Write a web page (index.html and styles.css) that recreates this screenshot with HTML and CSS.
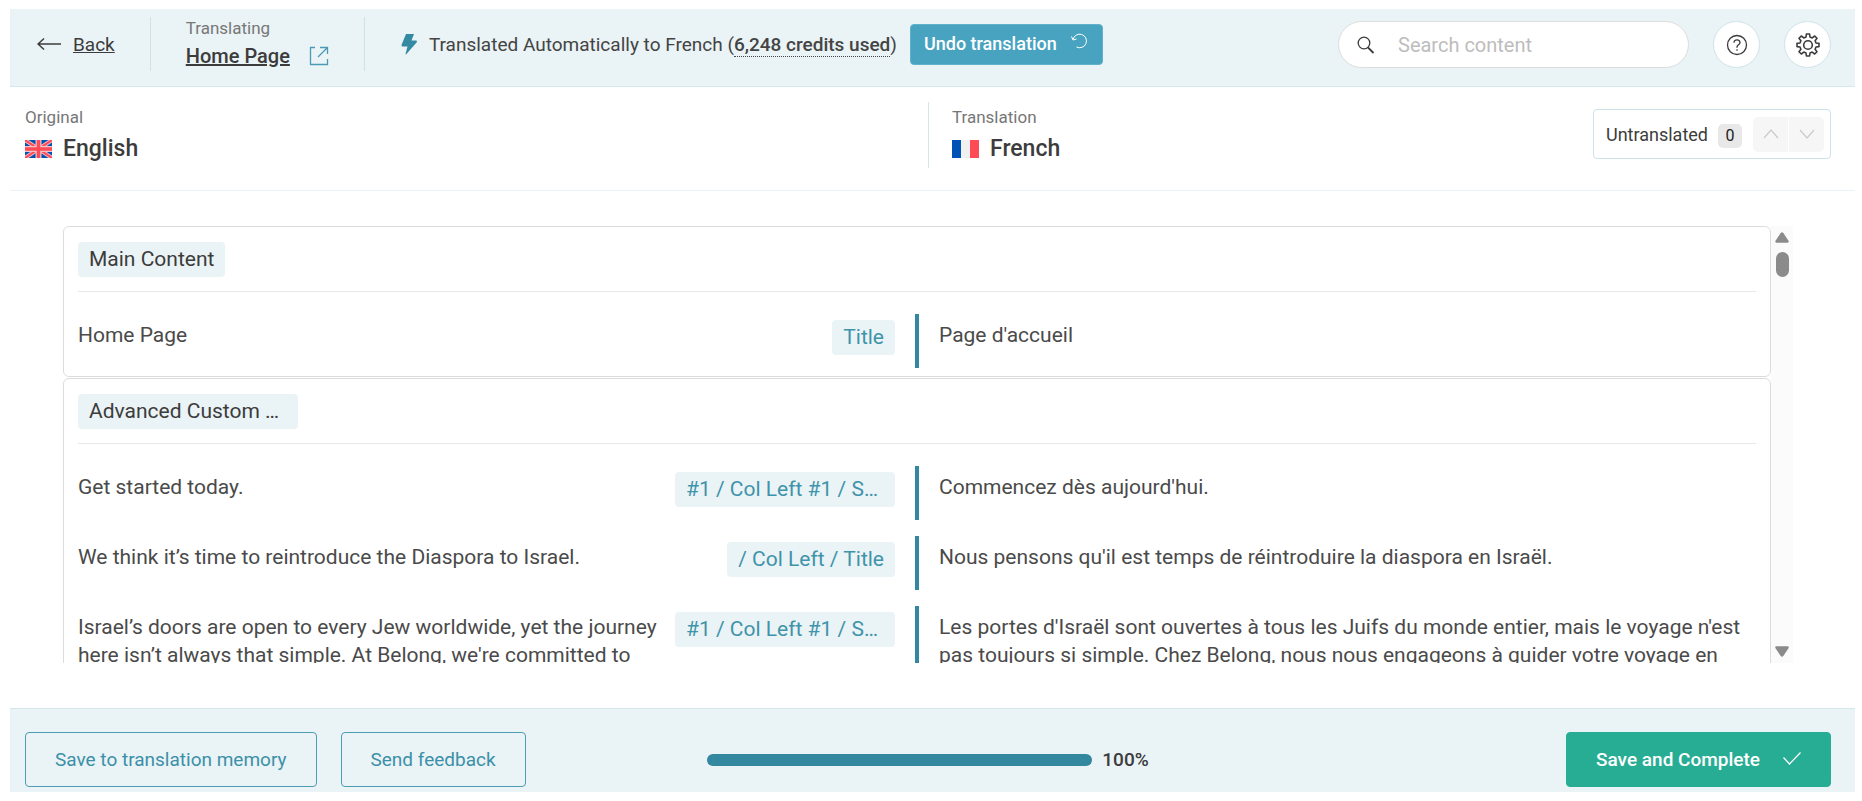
FILE: index.html
```html
<!DOCTYPE html>
<html lang="en">
<head>
    <meta charset="UTF-8">
    <meta name="viewport" content="width=device-width, initial-scale=1.0">
    <title>Translation Editor</title>
    <link rel="stylesheet" href="styles.css">
</head>
<body>
    <header class="topbar">
        <a class="back" href="#">
            <svg width="24" height="14" viewBox="0 0 24 14" fill="none" stroke="currentColor" stroke-width="1.5"><path d="M24 7H1M7 1.5L1 7l6 5.500"/></svg>
            <span class="back-text">Back</span>
        </a>
        <div class="job">
            <div>
                <div class="small">Translating</div>
                <a class="job-title" href="#">Home Page</a>
            </div>
            <a class="external" href="#" aria-label="Open page">
                <svg width="20" height="20" viewBox="0 0 20 20" fill="none" stroke="currentColor" stroke-width="1.300"><path d="M6 1.500H1.500v17h17V13M11 1.500h7.500V8M18 2l-9 9"/></svg>
            </a>
        </div>
        <div class="auto">
            <svg width="16" height="22" viewBox="0 0 16 22" fill="currentColor"><path d="M5 1h8l-2.500 6.500H15.500L16 9 5 21.500 4.500 21 6.500 13.500H1L.5 12z"/></svg>
            <span class="auto-text">Translated Automatically to French (<b class="credits">6,248 credits used</b>)</span>
            <button class="undo" type="button">Undo translation
                <svg width="17" height="16" viewBox="0 0 17 16" fill="none" stroke="currentColor" stroke-width="1"><path d="M2 6.500A6.800 6.800 0 1 1 5.500 14M.5 3.500l1.500 3.500 3.500-1"/></svg>
            </button>
        </div>
        <div class="tools">
            <label class="search">
                <svg width="18" height="18" viewBox="0 0 18 18" fill="none" stroke="currentColor" stroke-width="1.300"><circle cx="7" cy="7" r="5.800"/><path d="M11 11.500l5.500 5.500" stroke-width="1.800"/></svg>
                <input class="search-input" type="text" placeholder="Search content" aria-label="Search content">
            </label>
            <button class="round" type="button" aria-label="Help">
                <svg width="22" height="22" viewBox="0 0 22 22" fill="none" stroke="currentColor" stroke-width="1.300"><circle cx="11" cy="11" r="9.500"/><path d="M8 8.800C8 7 9.300 5.800 11 5.800s3 1.200 3 2.900c0 2-3 2.300-3 4.300v.8M11 15.300v1.500"/></svg>
            </button>
            <button class="round" type="button" aria-label="Settings">
                <svg width="24" height="24" viewBox="0 0 24 24" fill="none" stroke="currentColor" stroke-width="1.600" stroke-linejoin="round"><circle cx="12" cy="12" r="4.300"/><path d="M10.400 1h3.200l.4 3 2.200.9 2.500-1.900 2.300 2.300-1.900 2.500.9 2.200 3 .4v3.200l-3 .4-.9 2.200 1.900 2.500-2.300 2.300-2.500-1.900-2.200.9-.4 3h-3.200l-.4-3-2.200-.9L5.300 21 3 18.700l1.900-2.500L4 14l-3-.4v-3.200l3-.4.9-2.200L3 5.300 5.300 3l2.500 1.900L10 4z"/></svg>
            </button>
        </div>
    </header>

    <section class="languages">
        <div class="lang">
            <div class="small">Original</div>
            <div class="lang-name">
                <svg width="27" height="18" viewBox="0 0 27 18"><path fill="#0052b4" d="M0 0h27v18H0z"/><path stroke="#f0b8c0" stroke-width="4" d="M0 0l27 18M27 0L0 18"/><path stroke="#ff4b55" stroke-width="2" d="M0 0l27 18M27 0L0 18"/><path stroke="#f0c4ca" stroke-width="6" d="M13.500 0v18M0 9h27"/><path stroke="#ff4b55" stroke-width="3.500" d="M13.500 0v18M0 9h27"/></svg>
                English
            </div>
        </div>
        <div class="lang lang-target">
            <div class="small">Translation</div>
            <div class="lang-name">
                <svg width="27" height="18" viewBox="0 0 27 18"><path fill="#0052b4" d="M0 0h9v18H0z"/><path fill="#f0f0f0" d="M9 0h9v18H9z"/><path fill="#ff4b55" d="M18 0h9v18h-9z"/></svg>
                French
            </div>
        </div>
        <div class="untranslated">
            <span>Untranslated</span>
            <span class="count">0</span>
            <div class="nav">
                <button class="nav-btn" type="button" aria-label="Previous" disabled><svg width="16" height="10" viewBox="0 0 16 10" fill="none" stroke="currentColor" stroke-width="1.300"><path d="M1 9l7-8 7 8"/></svg></button>
                <button class="nav-btn" type="button" aria-label="Next" disabled><svg width="16" height="10" viewBox="0 0 16 10" fill="none" stroke="currentColor" stroke-width="1.300"><path d="M1 1l7 8 7-8"/></svg></button>
            </div>
        </div>
    </section>

    <main class="editor">
        <div class="groups">
            <section class="group">
                <div class="group-head"><span class="tag">Main Content</span></div>
                <div class="row">
                    <div class="source">
                        <p class="text">Home Page</p>
                        <span class="tag tag-field">Title</span>
                    </div>
                    <p class="target text">Page d'accueil</p>
                </div>
            </section>
            <section class="group">
                <div class="group-head"><span class="tag tag-long">Advanced Custom …</span></div>
                <div class="row">
                    <div class="source">
                        <p class="text">Get started today.</p>
                        <span class="tag tag-field tag-long">#1 / Col Left #1 / S…</span>
                    </div>
                    <p class="target text">Commencez dès aujourd'hui.</p>
                </div>
                <div class="row">
                    <div class="source">
                        <p class="text">We think it’s time to reintroduce the Diaspora to Israel.</p>
                        <span class="tag tag-field">/ Col Left / Title</span>
                    </div>
                    <p class="target text">Nous pensons qu'il est temps de réintroduire la diaspora en Israël.</p>
                </div>
                <div class="row">
                    <div class="source">
                        <p class="text">Israel’s doors are open to every Jew worldwide, yet the journey here isn’t always that simple. At Belong, we're committed to</p>
                        <span class="tag tag-field tag-long">#1 / Col Left #1 / S…</span>
                    </div>
                    <p class="target text">Les portes d'Israël sont ouvertes à tous les Juifs du monde entier, mais le voyage n'est pas toujours si simple. Chez Belong, nous nous engageons à guider votre voyage en</p>
                </div>
            </section>
        </div>
        <div class="scrollbar">
            <svg width="14" height="11" viewBox="0 0 14 11" fill="currentColor"><path d="M5.500 1.200a2 2 0 0 1 3 0l5 7.500c.5 1 .2 2-1 2h-11c-1.200 0-1.500-1-1-2z"/></svg>
            <div class="thumb"></div>
            <svg class="down" width="14" height="11" viewBox="0 0 14 11" fill="currentColor"><path d="M5.500 9.800a2 2 0 0 0 3 0l5-7.500c.5-1 .2-2-1-2h-11c-1.200 0-1.500 1-1 2z"/></svg>
        </div>
    </main>

    <footer class="bottombar">
        <div class="actions">
            <button class="btn" type="button">Save to translation memory</button>
            <button class="btn" type="button">Send feedback</button>
        </div>
        <div class="progress">
            <div class="track"><div class="fill" style="width: 100%"></div></div>
            <span class="percent">100%</span>
        </div>
        <button class="btn btn-done" type="button">Save and Complete
            <svg width="18" height="18" viewBox="0 0 18 18" fill="none" stroke="currentColor" stroke-width="1.200"><path d="M.5 6.500L6.500 13 17.500 1.500"/></svg>
        </button>
    </footer>
</body>
</html>
```
FILE: styles.css
```css
* {
    box-sizing: border-box;
}
body {
    display: flex;
    flex-direction: column;
    height: 100vh;
    margin: 0;
    padding: 9px 7px 9px 10px;
    background-color: #fff;
    color: #3c3c3c;
    font-family: Roboto, Arial, sans-serif;
    font-size: 19px;
}
button, input {
    font: inherit;
    color: inherit;
}
button {
    cursor: pointer;
}
svg {
    display: block;
    flex: none;
}
a {
    color: inherit;
}

/* top bar */
.topbar {
    display: flex;
    align-items: flex-start;
    flex: none;
    height: 78px;
    padding: 8px 24px 0 27px;
    background-color: #eaf3f6;
    border-bottom: 1px solid #d5e8ee;
}
.back {
    display: flex;
    align-items: center;
    gap: 12px;
    height: 54px;
    padding-right: 35px;
    border-right: 1px solid #cfe2e8;
    text-decoration: none;
}
.back-text {
    text-decoration: underline;
}
.job {
    display: flex;
    gap: 19px;
    height: 54px;
    padding: 0 35px;
    border-right: 1px solid #cfe2e8;
}
.small {
    color: #777;
    font-size: 17px;
    line-height: 22px;
}
.job-title {
    font-size: 20px;
    font-weight: 500;
    line-height: 34px;
}
.external {
    padding-top: 29px;
    color: #4a9ab3;
}
.auto {
    display: flex;
    align-items: center;
    gap: 12px;
    height: 54px;
    padding-left: 36px;
    color: #338aa2;
}
.auto-text {
    color: #444;
}
.credits {
    border-bottom: 1px dotted #444;
    font-weight: 500;
}
.undo {
    display: flex;
    gap: 14px;
    height: 41px;
    margin-left: 1px;
    padding: 8px 14px 8px 13px;
    border: 1px solid #60b1ca;
    border-radius: 4px;
    background-color: #48a3c0;
    color: #fff;
    font-size: 18px;
    font-weight: 500;
    line-height: 22px;
}
.tools {
    display: flex;
    gap: 24px;
    margin: 4px 0 0 auto;
}
.search {
    display: flex;
    align-items: center;
    gap: 23px;
    width: 351px;
    height: 47px;
    padding: 0 18px;
    border: 1px solid #ddd;
    border-radius: 24px;
    background-color: #fff;
}
.search-input {
    width: 100%;
    padding: 0;
    border: 0;
    outline: 0;
    background: none;
    font-size: 20px;
}
.search-input::placeholder {
    color: #bdbdbd;
}
.round {
    display: flex;
    align-items: center;
    justify-content: center;
    width: 47px;
    height: 47px;
    padding: 0;
    border: 1px solid #cfe4ea;
    border-radius: 50%;
    background-color: #fff;
}

/* language bar */
.languages {
    display: flex;
    align-items: flex-start;
    flex: none;
    height: 104px;
    padding: 15px 24px 0 15px;
    border-bottom: 1px solid #e9f2f5;
}
.lang {
    width: 50%;
    height: 66px;
    padding-top: 4px;
}
.lang-target {
    flex: 1;
    width: auto;
    padding-left: 23px;
    border-left: 1px solid #d5e5ea;
}
.lang-name {
    display: flex;
    align-items: center;
    gap: 11px;
    font-size: 23px;
    font-weight: 500;
    line-height: 42px;
}
.untranslated {
    display: flex;
    align-items: center;
    height: 50px;
    margin-top: 7px;
    padding: 0 6px 0 12px;
    border: 1px solid #cde3ea;
    border-radius: 4px;
    font-size: 18px;
}
.count {
    width: 24px;
    margin: 3px 11px 0 10px;
    border-radius: 5px;
    background-color: #e8e8e8;
    color: #222;
    font-size: 16px;
    line-height: 24px;
    text-align: center;
}
.nav {
    display: flex;
    gap: 1px;
    overflow: hidden;
    border-radius: 5px;
}
.nav-btn {
    display: flex;
    align-items: center;
    justify-content: center;
    width: 35px;
    height: 35px;
    padding: 0;
    border: 0;
    background-color: #f6f6f6;
    color: #ccc;
}

/* translation editor */
.editor {
    display: flex;
    flex: 1;
    min-height: 0;
    margin: 35px 62px 45px 53px;
}
.groups {
    flex: 1;
    overflow: hidden;
}
.group {
    padding: 15px 14px 8px;
    border: 1px solid #dcdcdc;
    border-radius: 6px;
    margin-bottom: 1px;
}
.group-head {
    display: flex;
    padding-bottom: 14px;
    margin-bottom: 22px;
    border-bottom: 1px solid #e8e8e8;
}
.tag {
    flex: none;
    padding: 0 11px;
    border-radius: 4px;
    background-color: #eaf3f5;
    font-size: 21px;
    line-height: 35px;
    white-space: nowrap;
}
.tag-field {
    color: #3f93ab;
}
.tag-long {
    width: 220px;
}
.row {
    display: grid;
    grid-template-columns: 1fr 1fr;
    min-height: 54px;
    margin-bottom: 16px;
}
.row:last-child {
    margin-bottom: 0;
}
.source {
    display: flex;
    align-items: flex-start;
    justify-content: space-between;
    gap: 16px;
    padding: 6px 22px 0 0;
}
.source .text {
    padding-top: 1px;
}
.text {
    margin: 0;
    color: #4a4a4a;
    font-size: 21px;
    line-height: 28px;
}
.target {
    padding: 7px 10px 0 20px;
    margin-left: -2px;
    border-left: 4px solid #3388a0;
}
.scrollbar {
    display: flex;
    flex-direction: column;
    align-items: center;
    width: 22px;
    padding: 6px 0;
    background-color: #fbfbfb;
    color: #8b8b8b;
}
.thumb {
    width: 13px;
    height: 25px;
    margin-top: 9px;
    border-radius: 7px;
    background-color: #8b8b8b;
}
.down {
    margin-top: auto;
}

/* bottom bar */
.bottombar {
    display: grid;
    grid-template-columns: 1fr auto 1fr;
    align-items: start;
    flex: none;
    height: 84px;
    padding: 23px 24px 0 15px;
    border-top: 1px solid #d3e5eb;
    background-color: #eaf3f6;
}
.actions {
    display: flex;
    gap: 24px;
}
.btn {
    height: 55px;
    padding: 0 29px;
    border: 1px solid #4f9db3;
    border-radius: 4px;
    background-color: transparent;
    color: #3b90a8;
}
.btn-done {
    display: flex;
    align-items: center;
    justify-self: end;
    gap: 23px;
    border-color: #28ad95;
    background-color: #28ad95;
    color: #fff;
    font-weight: 500;
}
.progress {
    display: flex;
    align-items: center;
    gap: 10px;
    height: 55px;
}
.track {
    width: 385px;
    height: 12px;
    border-radius: 6px;
    background-color: #d5e5ea;
}
.fill {
    height: 12px;
    border-radius: 6px;
    background-color: #3388a0;
}
.percent {
    font-weight: 500;
}
```
